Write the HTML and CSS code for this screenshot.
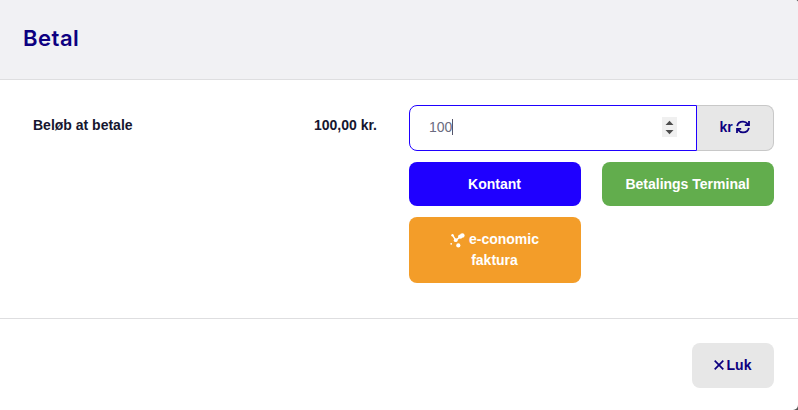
FILE: index.html
```html
<!DOCTYPE html>
<html lang="da">
<head>
<meta charset="utf-8">
<title>Betal</title>
<link rel="stylesheet" href="styles.css">
</head>
<body>
<div class="modal">
  <header class="modal-header"><h1 class="title">Betal</h1></header>
  <main class="modal-body">
    <div class="summary"><span class="label">Beløb at betale</span><span class="total">100,00 kr.</span></div>
    <div class="payment">
      <div class="input-group">
        <div class="amount">
          <span class="value">100</span><span class="caret"></span>
          <span class="spinner">
            <svg width="15" height="20" viewBox="0 0 15 20"><path d="M3.5 8L7.5 3.8L11.5 8zM3.5 13L7.5 17.2L11.5 13z" fill="#4d4d4d"/></svg>
          </span>
        </div>
        <button class="addon"><span>kr</span>
          <svg class="refresh" width="14" height="14" viewBox="0 0 14 14" fill="none" stroke="#0d0080" stroke-width="1.8"><path d="M1.2 6.2C1.7 3.3 4.2 1.7 7 1.7C9 1.7 10.5 2.5 12 4.2M13 1V5.1H8.8M12.8 7.8C12.3 10.7 9.8 12.3 7 12.3C5 12.3 3.5 11.5 2 9.8M1 13V8.9H5.2"/></svg>
        </button>
      </div>
      <div class="methods">
        <button class="btn cash"><span>Kontant</span></button>
        <button class="btn terminal"><span>Betalings Terminal</span></button>
        <button class="btn invoice">
          <span class="line"><svg class="logo" width="15" height="15" viewBox="0 0 15 15" fill="#fff"><path d="M2.7 2.4L5.8 7.4L11 3.2" fill="none" stroke="#fff" stroke-width="1.5"/><circle cx="2.5" cy="2.3" r="1.2"/><circle cx="5.7" cy="7.2" r="1.9"/><circle cx="10.3" cy="3.6" r="2.2"/><circle cx="12.3" cy="2.5" r="2.3"/><circle cx="8.3" cy="12.4" r="2.1"/><circle cx="1.2" cy="10.8" r=".9"/></svg><span>e-conomic</span></span>
          <span>faktura</span>
        </button>
      </div>
    </div>
  </main>
  <footer class="modal-footer">
    <button class="close"><svg width="10" height="10" viewBox="0 0 10 10" fill="none" stroke="#0d0080" stroke-width="1.7"><path d="M.7 .7L9.3 9.3M9.3 .7L.7 9.3"/></svg><span>Luk</span></button>
  </footer>
</div>
</body>
</html>
```
FILE: styles.css
```css
* { box-sizing: border-box; }
body { margin: 0; background: #555; font: bold 14px/21px "Liberation Sans", Arial, sans-serif; color: #16162f; }
button { font: inherit; border: 0; padding: 0; color: #0d0080; border-radius: 8px; }
svg { display: block; flex: none; }
.modal { height: 410px; display: flex; flex-direction: column; background: #fff; border-radius: 0 3px 5px 0; overflow: hidden; }
.modal-header { height: 80px; padding: 22px 23px 0; background: #f1f1f4; border-bottom: 1px solid #dedee0; }
.title { margin: 0; font: 600 22px/32px Inter, sans-serif; letter-spacing: .5px; color: #0d0080; }
.modal-body { height: 238px; padding: 25px 24px 0 33px; display: flex; justify-content: space-between; }
.summary { width: 344px; padding-top: 10px; display: flex; justify-content: space-between; }
.payment { width: 365px; }
.input-group { display: flex; height: 46px; }
.amount { width: 288px; border: 1px solid #1f00ff; border-radius: 8px 0 0 8px; padding: 0 19px 2px; display: flex; align-items: center; font-weight: 400; color: #6b6b80; }
.caret { width: 1px; height: 16px; background: #55556a; }
.spinner { margin-left: auto; background: #f0f0f0; }
.addon { flex: 1; display: flex; align-items: center; justify-content: center; gap: 3px; padding: 0 1px 2px 0; background: #e7e7e7; border: 1px solid #c8c8c8; border-left: 0; border-radius: 0 8px 8px 0; }
.methods { margin-top: 11px; display: grid; grid-template-columns: 172px 172px; grid-template-rows: 44px 66px; gap: 11px 21px; }
.btn { color: #fff; padding-right: 1px; display: flex; flex-direction: column; align-items: center; justify-content: center; }
.cash { background: #1f00ff; }
.terminal { background: #62ad4d; }
.invoice { background: #f39d29; }
.line { display: flex; align-items: center; gap: 4px; }
.logo { margin-top: 2px; }
.modal-footer { flex: 1; border-top: 1px solid #dedee0; padding: 24px 24px 0; display: flex; justify-content: flex-end; align-items: flex-start; }
.close { width: 82px; height: 45px; padding-right: 1px; display: flex; align-items: center; justify-content: center; gap: 3px; background: #e7e7e7; }
.close svg { margin-bottom: 1px; }
```
